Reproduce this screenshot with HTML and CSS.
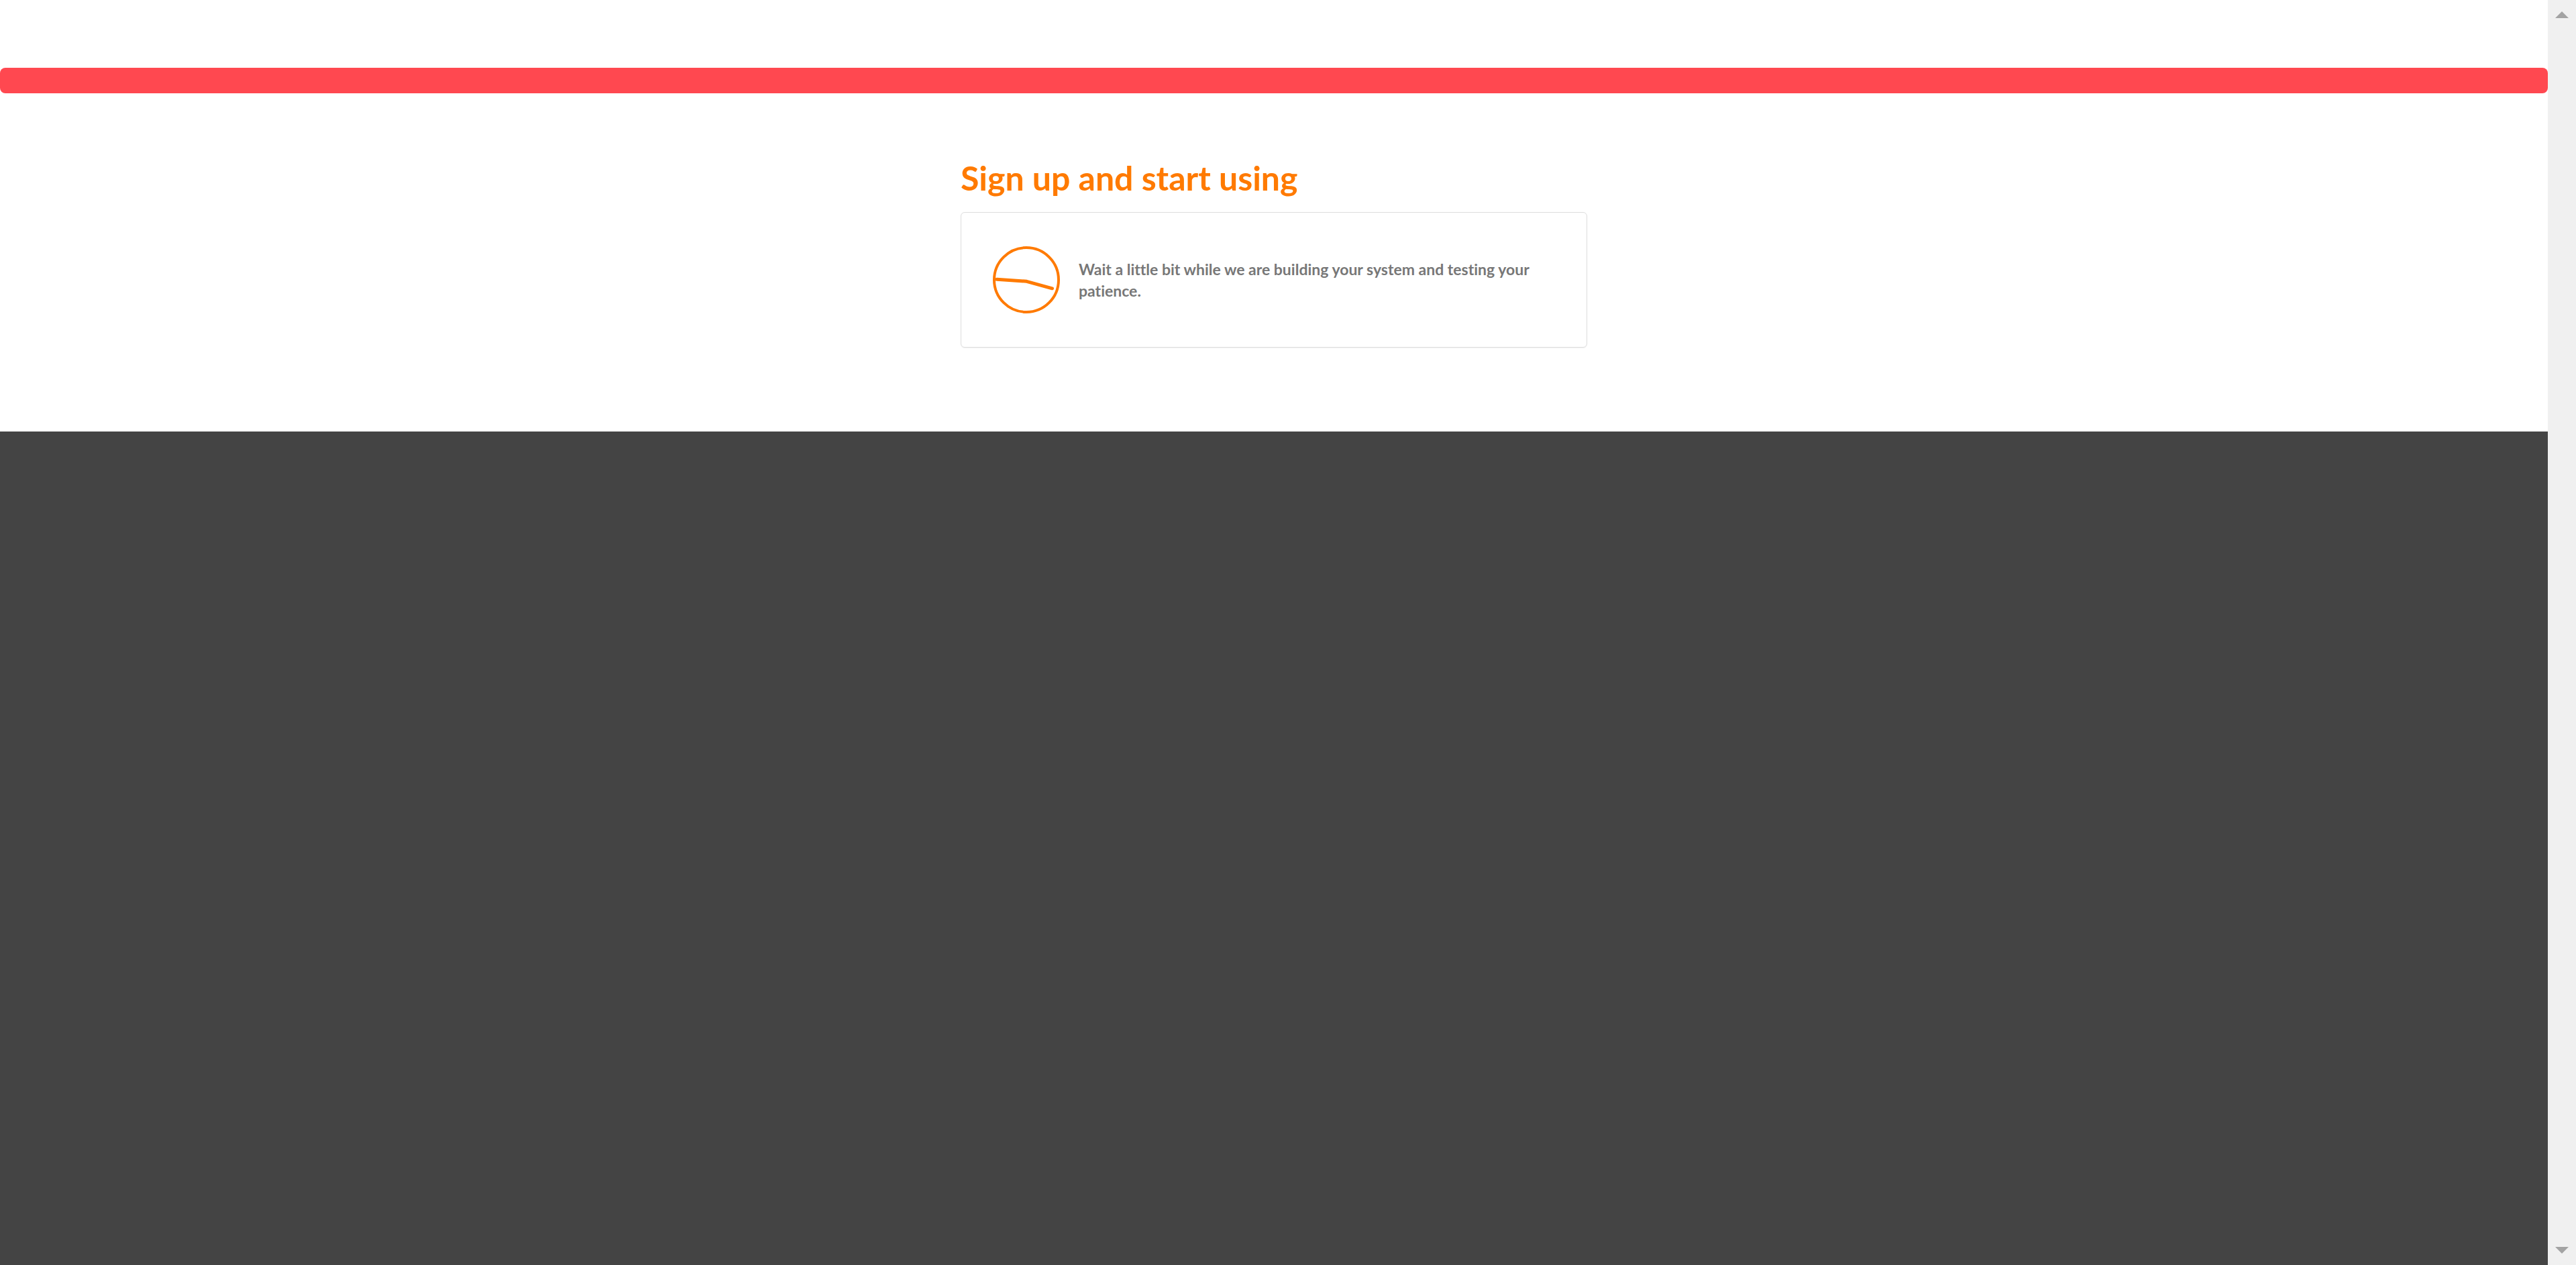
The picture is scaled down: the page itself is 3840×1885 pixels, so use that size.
FILE: index.html
```html
<!DOCTYPE html>
<html lang="en">
<head>
<meta charset="utf-8">
<meta name="viewport" content="width=device-width, initial-scale=1">
<title>Sign up and start using</title>
<link rel="stylesheet" href="styles.css">
</head>
<body>
<div class="page">
  <div class="content">
    <div class="alert" role="alert"></div>
    <main class="signup">
      <h1 class="title">Sign up and start using</h1>
      <section class="card">
        <svg class="clock" viewBox="0 0 100 100" aria-hidden="true">
          <circle cx="50" cy="50" r="48" fill="none" stroke="currentColor" stroke-width="4"/>
          <path d="M6 49.3 50.5 52.3 88.5 62.8" fill="none" stroke="currentColor" stroke-width="5" stroke-linecap="round" stroke-linejoin="round"/>
        </svg>
        <p class="message">Wait a little bit while we are building your system and testing your patience.</p>
      </section>
    </main>
  </div>
  <div class="scrollbar" aria-hidden="true">
    <svg class="arrow" viewBox="0 0 20 10"><path d="M0 10 10 0 20 10z" fill="currentColor"/></svg>
    <svg class="arrow" viewBox="0 0 20 10"><path d="M0 0 10 10 20 0z" fill="currentColor"/></svg>
  </div>
</div>
</body>
</html>
```
FILE: styles.css
```css
* {
  box-sizing: border-box;
}

body {
  margin: 0;
  background: #444;
  font-family: Lato, "Open Sans", sans-serif;
  font-variant-ligatures: none;
}

.page {
  display: flex;
  align-items: stretch;
  min-height: 100vh;
}

.content {
  flex: 1;
  align-self: flex-start;
  padding: 101px 0 125px;
  background: #fff;
}

.alert {
  height: 38px;
  border-radius: 8px;
  background: #ff4850;
}

.signup {
  max-width: 934px;
  margin: 96px auto 0;
}

.title {
  margin: 0 0 21px;
  color: #ff7a00;
  font-size: 50px;
  font-weight: 700;
  line-height: 60px;
}

.card {
  display: flex;
  align-items: center;
  gap: 28px;
  padding: 50px 47px;
  border: 1px solid #ddd;
  border-radius: 6px;
  box-shadow: 0 1px 1px rgba(0, 0, 0, 0.05);
}

.clock {
  flex: none;
  width: 100px;
  height: 100px;
  color: #ff7a00;
}

.message {
  margin: 0;
  color: #777;
  font-size: 23px;
  font-weight: 700;
  line-height: 32px;
}

.scrollbar {
  display: flex;
  flex-direction: column;
  justify-content: space-between;
  align-items: center;
  width: 42px;
  padding: 17px 0;
  background: #f0f0f0;
}

.arrow {
  width: 20px;
  height: 10px;
  color: #a3a3a3;
}
```
